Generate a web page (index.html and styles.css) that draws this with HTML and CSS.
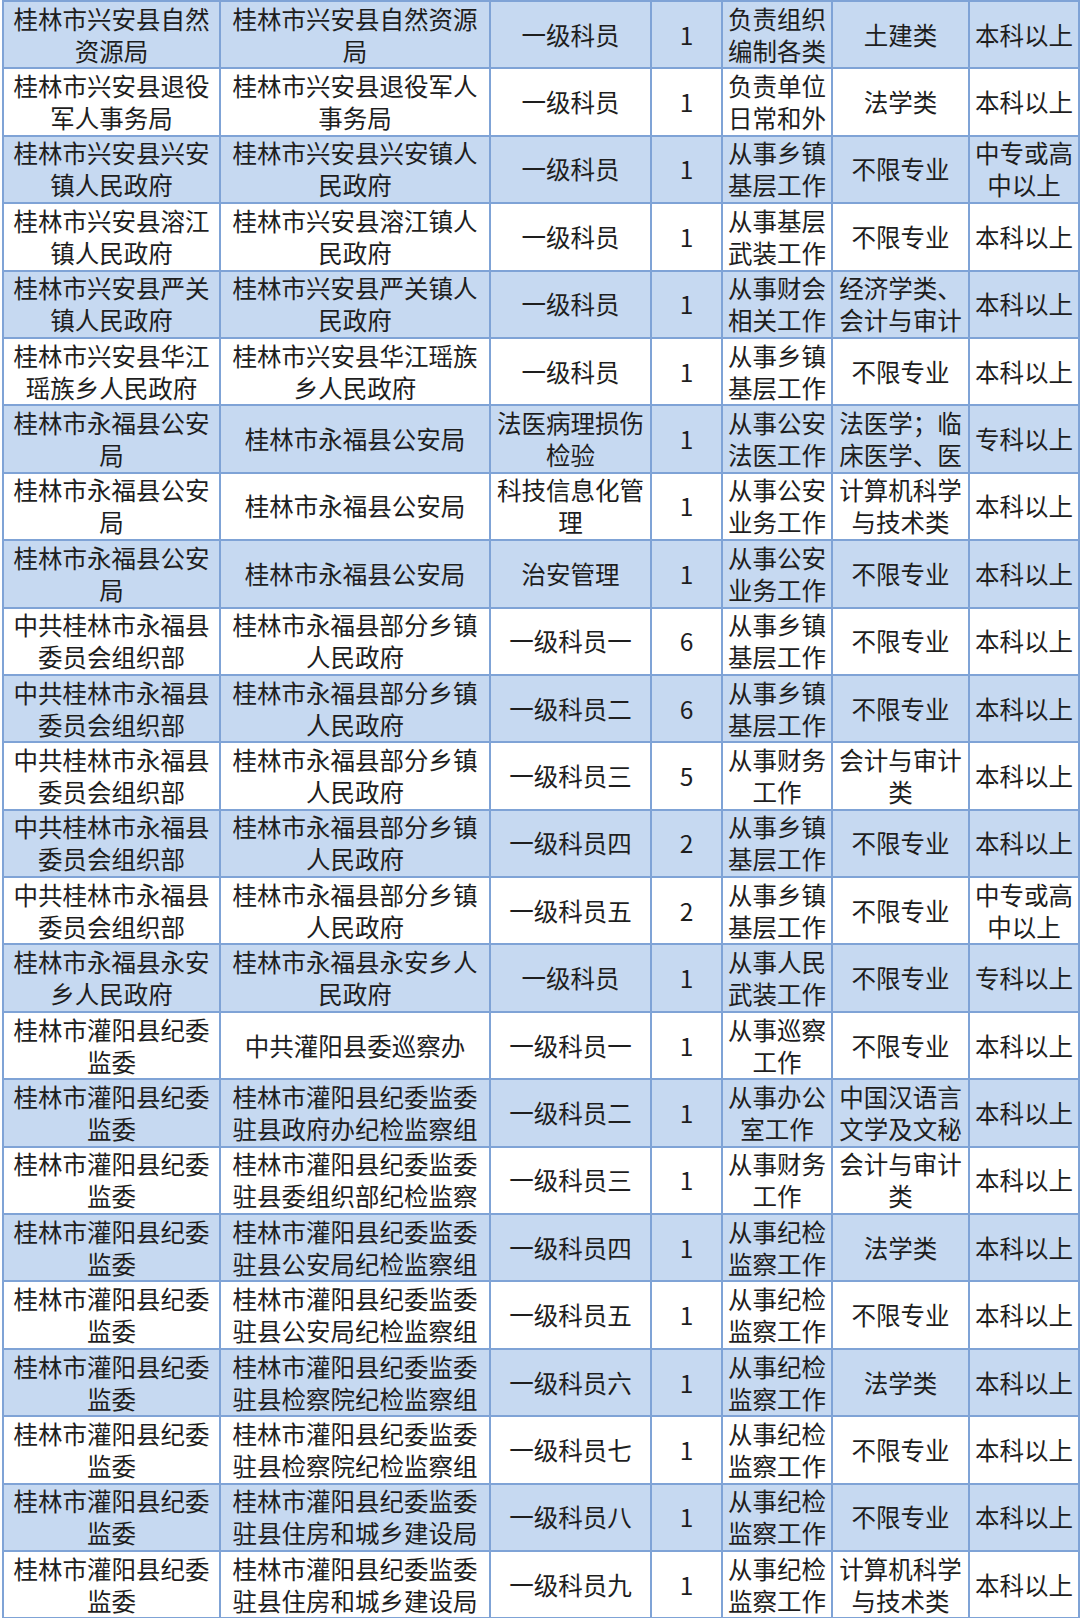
FILE: index.html
```html
<!DOCTYPE html>
<html lang="zh-CN">
<head>
<meta charset="utf-8">
<title>职位表</title>
<link rel="stylesheet" href="styles.css">
</head>
<body>
<table class="jobs">
<colgroup>
<col class="c-dept"><col class="c-unit"><col class="c-pos"><col class="c-num"><col class="c-duty"><col class="c-major"><col class="c-edu">
</colgroup>
<tbody>
<tr><td>桂林市兴安县自然<br>资源局</td><td>桂林市兴安县自然资源<br>局</td><td>一级科员</td><td>1</td><td>负责组织<br>编制各类</td><td>土建类</td><td>本科以上</td></tr>
<tr><td>桂林市兴安县退役<br>军人事务局</td><td>桂林市兴安县退役军人<br>事务局</td><td>一级科员</td><td>1</td><td>负责单位<br>日常和外</td><td>法学类</td><td>本科以上</td></tr>
<tr><td>桂林市兴安县兴安<br>镇人民政府</td><td>桂林市兴安县兴安镇人<br>民政府</td><td>一级科员</td><td>1</td><td>从事乡镇<br>基层工作</td><td>不限专业</td><td>中专或高<br>中以上</td></tr>
<tr><td>桂林市兴安县溶江<br>镇人民政府</td><td>桂林市兴安县溶江镇人<br>民政府</td><td>一级科员</td><td>1</td><td>从事基层<br>武装工作</td><td>不限专业</td><td>本科以上</td></tr>
<tr><td>桂林市兴安县严关<br>镇人民政府</td><td>桂林市兴安县严关镇人<br>民政府</td><td>一级科员</td><td>1</td><td>从事财会<br>相关工作</td><td>经济学类、<br>会计与审计</td><td>本科以上</td></tr>
<tr><td>桂林市兴安县华江<br>瑶族乡人民政府</td><td>桂林市兴安县华江瑶族<br>乡人民政府</td><td>一级科员</td><td>1</td><td>从事乡镇<br>基层工作</td><td>不限专业</td><td>本科以上</td></tr>
<tr><td>桂林市永福县公安<br>局</td><td>桂林市永福县公安局</td><td>法医病理损伤<br>检验</td><td>1</td><td>从事公安<br>法医工作</td><td>法医学；临<br>床医学、医</td><td>专科以上</td></tr>
<tr><td>桂林市永福县公安<br>局</td><td>桂林市永福县公安局</td><td>科技信息化管<br>理</td><td>1</td><td>从事公安<br>业务工作</td><td>计算机科学<br>与技术类</td><td>本科以上</td></tr>
<tr><td>桂林市永福县公安<br>局</td><td>桂林市永福县公安局</td><td>治安管理</td><td>1</td><td>从事公安<br>业务工作</td><td>不限专业</td><td>本科以上</td></tr>
<tr><td>中共桂林市永福县<br>委员会组织部</td><td>桂林市永福县部分乡镇<br>人民政府</td><td>一级科员一</td><td>6</td><td>从事乡镇<br>基层工作</td><td>不限专业</td><td>本科以上</td></tr>
<tr><td>中共桂林市永福县<br>委员会组织部</td><td>桂林市永福县部分乡镇<br>人民政府</td><td>一级科员二</td><td>6</td><td>从事乡镇<br>基层工作</td><td>不限专业</td><td>本科以上</td></tr>
<tr><td>中共桂林市永福县<br>委员会组织部</td><td>桂林市永福县部分乡镇<br>人民政府</td><td>一级科员三</td><td>5</td><td>从事财务<br>工作</td><td>会计与审计<br>类</td><td>本科以上</td></tr>
<tr><td>中共桂林市永福县<br>委员会组织部</td><td>桂林市永福县部分乡镇<br>人民政府</td><td>一级科员四</td><td>2</td><td>从事乡镇<br>基层工作</td><td>不限专业</td><td>本科以上</td></tr>
<tr><td>中共桂林市永福县<br>委员会组织部</td><td>桂林市永福县部分乡镇<br>人民政府</td><td>一级科员五</td><td>2</td><td>从事乡镇<br>基层工作</td><td>不限专业</td><td>中专或高<br>中以上</td></tr>
<tr><td>桂林市永福县永安<br>乡人民政府</td><td>桂林市永福县永安乡人<br>民政府</td><td>一级科员</td><td>1</td><td>从事人民<br>武装工作</td><td>不限专业</td><td>专科以上</td></tr>
<tr><td>桂林市灌阳县纪委<br>监委</td><td>中共灌阳县委巡察办</td><td>一级科员一</td><td>1</td><td>从事巡察<br>工作</td><td>不限专业</td><td>本科以上</td></tr>
<tr><td>桂林市灌阳县纪委<br>监委</td><td>桂林市灌阳县纪委监委<br>驻县政府办纪检监察组</td><td>一级科员二</td><td>1</td><td>从事办公<br>室工作</td><td>中国汉语言<br>文学及文秘</td><td>本科以上</td></tr>
<tr><td>桂林市灌阳县纪委<br>监委</td><td>桂林市灌阳县纪委监委<br>驻县委组织部纪检监察</td><td>一级科员三</td><td>1</td><td>从事财务<br>工作</td><td>会计与审计<br>类</td><td>本科以上</td></tr>
<tr><td>桂林市灌阳县纪委<br>监委</td><td>桂林市灌阳县纪委监委<br>驻县公安局纪检监察组</td><td>一级科员四</td><td>1</td><td>从事纪检<br>监察工作</td><td>法学类</td><td>本科以上</td></tr>
<tr><td>桂林市灌阳县纪委<br>监委</td><td>桂林市灌阳县纪委监委<br>驻县公安局纪检监察组</td><td>一级科员五</td><td>1</td><td>从事纪检<br>监察工作</td><td>不限专业</td><td>本科以上</td></tr>
<tr><td>桂林市灌阳县纪委<br>监委</td><td>桂林市灌阳县纪委监委<br>驻县检察院纪检监察组</td><td>一级科员六</td><td>1</td><td>从事纪检<br>监察工作</td><td>法学类</td><td>本科以上</td></tr>
<tr><td>桂林市灌阳县纪委<br>监委</td><td>桂林市灌阳县纪委监委<br>驻县检察院纪检监察组</td><td>一级科员七</td><td>1</td><td>从事纪检<br>监察工作</td><td>不限专业</td><td>本科以上</td></tr>
<tr><td>桂林市灌阳县纪委<br>监委</td><td>桂林市灌阳县纪委监委<br>驻县住房和城乡建设局</td><td>一级科员八</td><td>1</td><td>从事纪检<br>监察工作</td><td>不限专业</td><td>本科以上</td></tr>
<tr><td>桂林市灌阳县纪委<br>监委</td><td>桂林市灌阳县纪委监委<br>驻县住房和城乡建设局</td><td>一级科员九</td><td>1</td><td>从事纪检<br>监察工作</td><td>计算机科学<br>与技术类</td><td>本科以上</td></tr>
</tbody>
</table>
</body>
</html>
```

FILE: styles.css
```css
html, body {
  margin: 0;
  padding: 0;
  background: #ffffff;
}
body {
  padding-left: 2px;
  font-family: "Noto Sans CJK SC", "Noto Sans", sans-serif;
  color: #1e1e1e;
}
.jobs {
  border-collapse: collapse;
  table-layout: fixed;
  width: 1076px;
  font-size: 24.5px;
  line-height: 32px;
}
.c-dept { width: 217px; }
.c-unit { width: 270px; }
.c-pos { width: 161px; }
.c-num { width: 71px; }
.c-duty { width: 110px; }
.c-major { width: 137px; }
.c-edu { width: 110px; }
.jobs tr {
  height: 67.4px;
}
.jobs tr:nth-child(odd) {
  background: #c6d9f1;
}
.jobs td {
  border: 2px solid #7fa3d6;
  padding: 0;
  text-align: center;
  vertical-align: middle;
  white-space: nowrap;
  overflow: hidden;
}
```
